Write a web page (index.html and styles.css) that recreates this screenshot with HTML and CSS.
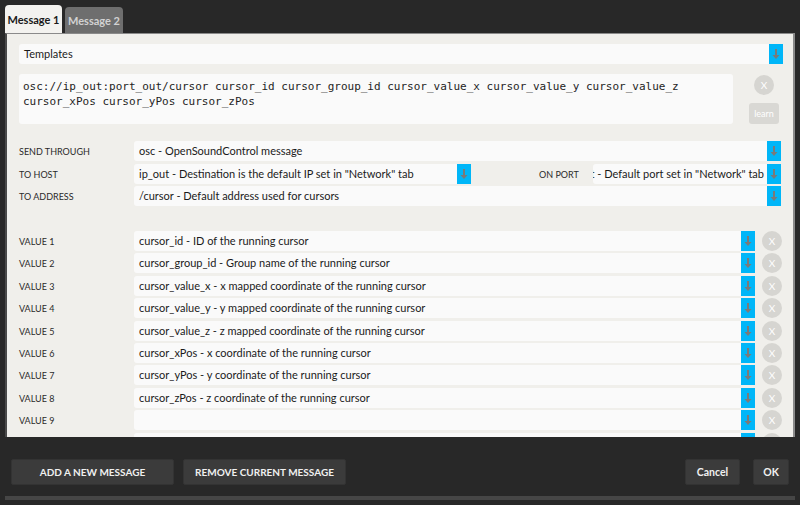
FILE: index.html
```html
<!DOCTYPE html>
<html>
<head>
<meta charset="utf-8">
<link rel="stylesheet" href="styles.css">
</head>
<body>
<div class="tabs">
  <div class="tab active">Message 1</div>
  <div class="tab">Message 2</div>
</div>
<div class="panel">
  <div class="select full"><span class="val">Templates</span><span class="arrow"><svg width="8" height="12" viewBox="0 0 8 12"><rect x="3" y="1" width="2" height="7" fill="#7a7a7a"/><path d="M0.5 7 L7.5 7 L4 11 Z" fill="#7a7a7a"/></svg></span></div>
  <div class="cmd">
    <div class="code">osc://ip_out:port_out/cursor cursor_id cursor_group_id cursor_value_x cursor_value_y cursor_value_z cursor_xPos cursor_yPos cursor_zPos</div>
    <div class="cmd-side">
      <div class="xbtn">X</div>
      <div class="learn">learn</div>
    </div>
  </div>
  <div class="rows top">
    <div class="row">
      <div class="label">SEND THROUGH</div>
      <div class="select grow"><span class="val">osc - OpenSoundControl message</span><span class="arrow"><svg width="8" height="12" viewBox="0 0 8 12"><rect x="3" y="1" width="2" height="7" fill="#7a7a7a"/><path d="M0.5 7 L7.5 7 L4 11 Z" fill="#7a7a7a"/></svg></span></div>
    </div>
    <div class="row">
      <div class="label">TO HOST</div>
      <div class="select host"><span class="val">ip_out - Destination is the default IP set in "Network" tab</span><span class="arrow"><svg width="8" height="12" viewBox="0 0 8 12"><rect x="3" y="1" width="2" height="7" fill="#7a7a7a"/><path d="M0.5 7 L7.5 7 L4 11 Z" fill="#7a7a7a"/></svg></span></div>
      <div class="label port-label">ON PORT</div>
      <div class="select port"><span class="val end"><span>port_out - Default port set in "Network" tab</span></span><span class="arrow"><svg width="8" height="12" viewBox="0 0 8 12"><rect x="3" y="1" width="2" height="7" fill="#7a7a7a"/><path d="M0.5 7 L7.5 7 L4 11 Z" fill="#7a7a7a"/></svg></span></div>
    </div>
    <div class="row">
      <div class="label">TO ADDRESS</div>
      <div class="select grow"><span class="val">/cursor - Default address used for cursors</span><span class="arrow"><svg width="8" height="12" viewBox="0 0 8 12"><rect x="3" y="1" width="2" height="7" fill="#7a7a7a"/><path d="M0.5 7 L7.5 7 L4 11 Z" fill="#7a7a7a"/></svg></span></div>
    </div>
  </div>
  <div class="rows values">
    <div class="row"><div class="label">VALUE 1</div><div class="select grow"><span class="val">cursor_id - ID of the running cursor</span><span class="arrow"><svg width="8" height="12" viewBox="0 0 8 12"><rect x="3" y="1" width="2" height="7" fill="#7a7a7a"/><path d="M0.5 7 L7.5 7 L4 11 Z" fill="#7a7a7a"/></svg></span></div><div class="xbtn small">X</div></div>
    <div class="row"><div class="label">VALUE 2</div><div class="select grow"><span class="val">cursor_group_id - Group name of the running cursor</span><span class="arrow"><svg width="8" height="12" viewBox="0 0 8 12"><rect x="3" y="1" width="2" height="7" fill="#7a7a7a"/><path d="M0.5 7 L7.5 7 L4 11 Z" fill="#7a7a7a"/></svg></span></div><div class="xbtn small">X</div></div>
    <div class="row"><div class="label">VALUE 3</div><div class="select grow"><span class="val">cursor_value_x - x mapped coordinate of the running cursor</span><span class="arrow"><svg width="8" height="12" viewBox="0 0 8 12"><rect x="3" y="1" width="2" height="7" fill="#7a7a7a"/><path d="M0.5 7 L7.5 7 L4 11 Z" fill="#7a7a7a"/></svg></span></div><div class="xbtn small">X</div></div>
    <div class="row"><div class="label">VALUE 4</div><div class="select grow"><span class="val">cursor_value_y - y mapped coordinate of the running cursor</span><span class="arrow"><svg width="8" height="12" viewBox="0 0 8 12"><rect x="3" y="1" width="2" height="7" fill="#7a7a7a"/><path d="M0.5 7 L7.5 7 L4 11 Z" fill="#7a7a7a"/></svg></span></div><div class="xbtn small">X</div></div>
    <div class="row"><div class="label">VALUE 5</div><div class="select grow"><span class="val">cursor_value_z - z mapped coordinate of the running cursor</span><span class="arrow"><svg width="8" height="12" viewBox="0 0 8 12"><rect x="3" y="1" width="2" height="7" fill="#7a7a7a"/><path d="M0.5 7 L7.5 7 L4 11 Z" fill="#7a7a7a"/></svg></span></div><div class="xbtn small">X</div></div>
    <div class="row"><div class="label">VALUE 6</div><div class="select grow"><span class="val">cursor_xPos - x coordinate of the running cursor</span><span class="arrow"><svg width="8" height="12" viewBox="0 0 8 12"><rect x="3" y="1" width="2" height="7" fill="#7a7a7a"/><path d="M0.5 7 L7.5 7 L4 11 Z" fill="#7a7a7a"/></svg></span></div><div class="xbtn small">X</div></div>
    <div class="row"><div class="label">VALUE 7</div><div class="select grow"><span class="val">cursor_yPos - y coordinate of the running cursor</span><span class="arrow"><svg width="8" height="12" viewBox="0 0 8 12"><rect x="3" y="1" width="2" height="7" fill="#7a7a7a"/><path d="M0.5 7 L7.5 7 L4 11 Z" fill="#7a7a7a"/></svg></span></div><div class="xbtn small">X</div></div>
    <div class="row"><div class="label">VALUE 8</div><div class="select grow"><span class="val">cursor_zPos - z coordinate of the running cursor</span><span class="arrow"><svg width="8" height="12" viewBox="0 0 8 12"><rect x="3" y="1" width="2" height="7" fill="#7a7a7a"/><path d="M0.5 7 L7.5 7 L4 11 Z" fill="#7a7a7a"/></svg></span></div><div class="xbtn small">X</div></div>
    <div class="row"><div class="label">VALUE 9</div><div class="select grow"><span class="val"></span><span class="arrow"><svg width="8" height="12" viewBox="0 0 8 12"><rect x="3" y="1" width="2" height="7" fill="#7a7a7a"/><path d="M0.5 7 L7.5 7 L4 11 Z" fill="#7a7a7a"/></svg></span></div><div class="xbtn small">X</div></div>
    <div class="row"><div class="label"></div><div class="select grow"><span class="val"></span><span class="arrow"><svg width="8" height="12" viewBox="0 0 8 12"><rect x="3" y="1" width="2" height="7" fill="#7a7a7a"/><path d="M0.5 7 L7.5 7 L4 11 Z" fill="#7a7a7a"/></svg></span></div><div class="xbtn small"></div></div>
  </div>
</div>
<div class="footer">
  <div class="btn wide">ADD A NEW MESSAGE</div>
  <div class="btn wide">REMOVE CURRENT MESSAGE</div>
  <div class="spacer"></div>
  <div class="btn cancel">Cancel</div>
  <div class="btn ok">OK</div>
</div>
<div class="bottom-line"></div>
</body>
</html>
```
FILE: styles.css
```css
* { box-sizing: border-box; }
html, body { margin: 0; padding: 0; }
body {
  width: 800px;
  height: 505px;
  overflow: hidden;
  background: #282828;
  font-family: Lato, "Open Sans", sans-serif;
  color: #222;
}
.tabs {
  display: flex;
  align-items: flex-end;
  gap: 3px;
  padding: 5px 0 0 5px;
  height: 33px;
}
.tab {
  height: 26px;
  width: 58px;
  border-radius: 4px 4px 0 0;
  background: #6e6e6e;
  color: #d2d2d2;
  font-size: 11px;
  font-weight: 700;
  white-space: nowrap;
  display: flex;
  align-items: center;
  justify-content: center;
}
.tab.active {
  height: 28px;
  width: 57px;
  background: #f3f2ef;
  color: #1a1a1a;
}
.panel {
  margin: 0 5px;
  height: 404px;
  overflow: hidden;
  background: #f0efeb;
  border-top: 1px solid #8a8a8a;
  border-left: 2px solid #4a4a4a;
  border-right: 2px solid #8a8a8a;
  padding: 10px 10px 0 12px;
}
.select {
  height: 20px;
  background: #fafafa;
  border-radius: 3px 0 0 3px;
  display: flex;
  align-items: stretch;
  font-size: 11px;
  color: #1a1a1a;
}
.select .val {
  flex: 1;
  min-width: 0;
  overflow: hidden;
  white-space: nowrap;
  display: flex;
  align-items: center;
  padding-left: 5px;
  padding-bottom: 1px;
}
.select .val.end {
  justify-content: flex-end;
  padding-right: 3px;
}
.select .val.end span { flex-shrink: 0; }
.select .arrow {
  width: 14px;
  flex-shrink: 0;
  background: #00b6f8;
  display: flex;
  align-items: center;
  justify-content: center;
}
.full { width: 764px; }
.cmd {
  display: flex;
  margin-top: 10px;
  height: 50px;
}
.code {
  width: 714px;
  height: 50px;
  background: #fafafa;
  border-radius: 3px;
  font-family: "DejaVu Sans Mono", monospace;
  font-size: 11px;
  line-height: 15px;
  padding: 5px 4px;
  color: #1e1e1e;
}
.cmd-side {
  margin-left: 16px;
  display: flex;
  flex-direction: column;
  align-items: center;
  width: 30px;
}
.xbtn {
  width: 20px;
  height: 20px;
  border-radius: 50%;
  background: #d6d5d1;
  color: #fff;
  font-size: 10px;
  display: flex;
  align-items: center;
  justify-content: center;
  flex-shrink: 0;
}
.cmd-side .xbtn { margin-top: 1px; }
.learn {
  margin-top: 8px;
  width: 30px;
  height: 23px;
  border-radius: 3px;
  background: #d9d8d4;
  color: #fff;
  font-size: 9px;
  display: flex;
  align-items: center;
  justify-content: center;
}
.rows {
  display: flex;
  flex-direction: column;
  gap: 2.5px;
}
.rows.top { margin-top: 17px; width: 762px; }
.rows.values { margin-top: 25px; gap: 2.4px; }
.row {
  display: flex;
  align-items: center;
  height: 20px;
}
.label {
  width: 115px;
  flex-shrink: 0;
  font-size: 9px;
  color: #2a2a2a;
  padding-top: 1px;
  white-space: nowrap;
}
.grow { flex: 1; }
.rows.values .grow { flex: none; width: 621px; }
.rows.values .xbtn { margin-left: 7px; }
.host { width: 337px; flex-shrink: 0; }
.port-label { width: auto; margin-left: 68px; margin-right: 14px; }
.port { flex: 1; min-width: 0; }
.footer {
  display: flex;
  align-items: flex-start;
  gap: 9px;
  padding: 22px 11px 0 11px;
  height: 59px;
}
.btn {
  height: 26px;
  background: #3b3b3b;
  border: 1px solid #333;
  border-radius: 2px;
  color: #f0f0f0;
  font-size: 10px;
  font-weight: 700;
  display: flex;
  align-items: center;
  justify-content: center;
  white-space: nowrap;
}
.btn.wide { width: 163px; }
.spacer { flex: 1; }
.cancel { width: 55px; margin-right: 4px; font-size: 10.5px; }
.ok { width: 36px; font-size: 10.5px; }
.bottom-line {
  margin: 0 5px;
  height: 4px;
  background: #464646;
}
```
